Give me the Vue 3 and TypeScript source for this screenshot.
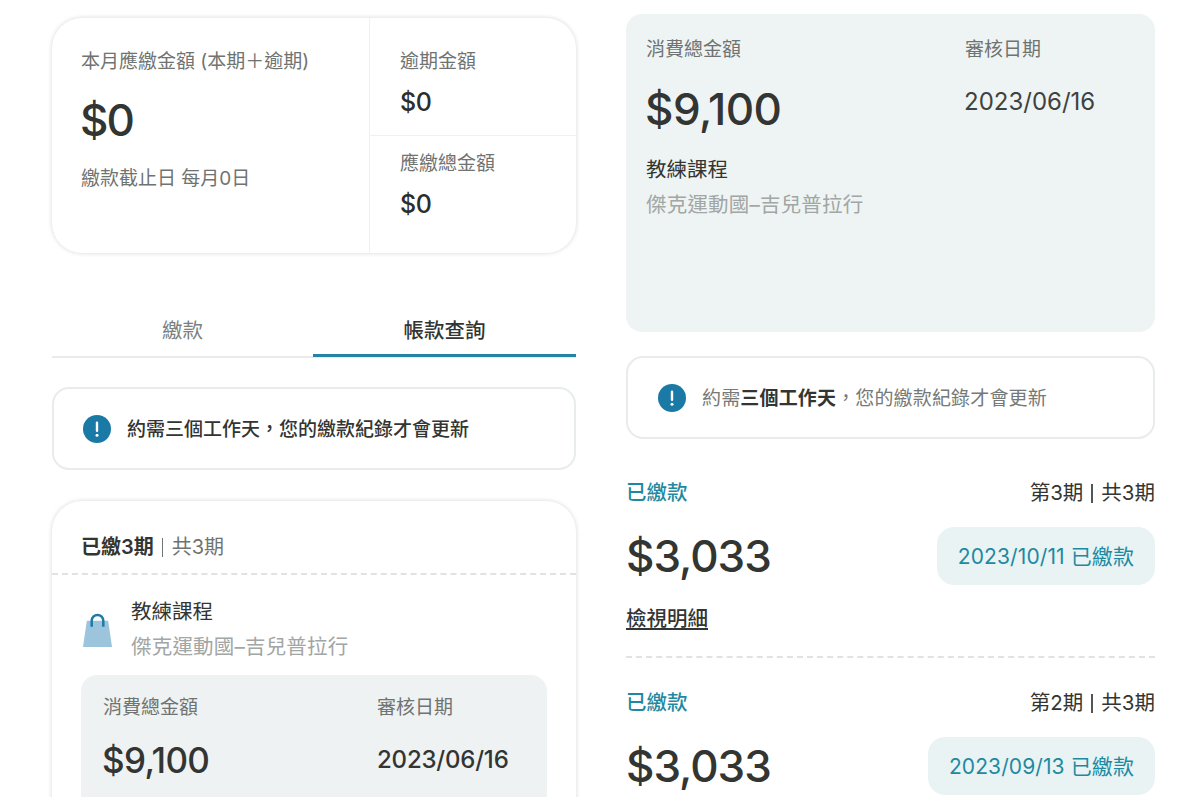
<script setup lang="ts">
interface Payment {
  period: string
  date: string
}
const payments: Payment[] = [
  { period: '第3期', date: '2023/10/11 已繳款' },
  { period: '第2期', date: '2023/09/13 已繳款' },
]
</script>

<template>
  <div class="page">
    <section class="left">
      <div class="summary">
        <div class="sum-main">
          <div class="label">本月應繳金額 (本期＋逾期)</div>
          <div class="sum-big">$0</div>
          <div class="label sum-due">繳款截止日 每月0日</div>
        </div>
        <div class="sum-side">
          <div class="side-cell">
            <div class="label">逾期金額</div>
            <div class="side-val">$0</div>
          </div>
          <div class="side-cell side-second">
            <div class="label">應繳總金額</div>
            <div class="side-val">$0</div>
          </div>
        </div>
      </div>

      <div class="tabs">
        <div class="tab">繳款</div>
        <div class="tab active">帳款查詢</div>
      </div>

      <div class="notice notice-left">
        <svg class="info" viewBox="0 0 28 28"><circle cx="14" cy="14" r="14" fill="#1a79a5" /><rect x="12.8" y="6.5" width="2.4" height="10.5" rx="1.2" fill="#fff" /><circle cx="14" cy="20.3" r="1.5" fill="#fff" /></svg>
        <span class="notice-bold">約需三個工作天，您的繳款紀錄才會更新</span>
      </div>

      <div class="plan">
        <div class="plan-head"><b>已繳3期</b><i></i><span>共3期</span></div>
        <div class="plan-body">
          <div class="course">
            <svg class="bag" viewBox="0 0 32 36">
              <path d="M5 8h22l4 27H1z" fill="#9cc5dd" />
              <path d="M10 14V8a6 6 0 0 1 12 0v6" fill="none" stroke="#1f7ba6" stroke-width="2.6" />
            </svg>
            <div>
              <div class="course-name">教練課程</div>
              <div class="course-sub">傑克運動國–吉兒普拉行</div>
            </div>
          </div>
          <div class="detail-small">
            <div class="detail-col1">
              <div class="label">消費總金額</div>
              <div class="small-amt">$9,100</div>
            </div>
            <div>
              <div class="label">審核日期</div>
              <div class="small-date">2023/06/16</div>
            </div>
          </div>
        </div>
      </div>
    </section>

    <section class="right">
      <div class="detail-big">
        <div class="big-col1">
          <div class="label">消費總金額</div>
          <div class="big-amt">$9,100</div>
          <div class="course-name big-name">教練課程</div>
          <div class="course-sub big-sub">傑克運動國–吉兒普拉行</div>
        </div>
        <div>
          <div class="label">審核日期</div>
          <div class="big-date">2023/06/16</div>
        </div>
      </div>

      <div class="notice notice-right">
        <svg class="info" viewBox="0 0 28 28"><circle cx="14" cy="14" r="14" fill="#1a79a5" /><rect x="12.8" y="6.5" width="2.4" height="10.5" rx="1.2" fill="#fff" /><circle cx="14" cy="20.3" r="1.5" fill="#fff" /></svg>
        <span class="notice-plain">約需<b>三個工作天</b>，您的繳款紀錄才會更新</span>
      </div>

      <div v-for="(p, i) in payments" :key="p.period" class="pay" :class="{ first: i === 0 }">
        <div class="pay-top">
          <span class="paid">已繳款</span>
          <span class="period">{{ p.period }}<i></i>共3期</span>
        </div>
        <div class="pay-mid">
          <span class="pay-amt">$3,033</span>
          <span class="pay-pill">{{ p.date }}</span>
        </div>
        <a v-if="i === 0" class="pay-link">檢視明細</a>
      </div>
    </section>
  </div>
</template>

<style>
html, body { margin: 0; background: #fff; }
</style>

<style scoped>
.page {
  width: 1200px;
  height: 797px;
  overflow: hidden;
  display: flex;
  background: #fff;
  color: #333532;
  font-family: Inter, "Noto Sans CJK TC", sans-serif;
  box-sizing: border-box;
  padding-left: 52px;
}
.left { width: 524px; padding-top: 18px; flex-shrink: 0; }
.right { width: 529px; margin-left: 50px; padding-top: 14px; flex-shrink: 0; }
.label { font-size: 19px; line-height: 28px; color: #6f7371; }

.summary {
  height: 235px;
  border-radius: 30px;
  display: flex;
  box-shadow: 0 0 4px rgba(60, 70, 70, 0.22);
  box-sizing: border-box;
}
.sum-main { width: 318px; padding: 30px 0 0 29px; box-sizing: border-box; border-right: 1px solid #eef1f1; }
.sum-big { font-size: 44px; line-height: 54px; margin-top: 17px; font-weight: 500; letter-spacing: -2px; margin-left: -1px; }
.sum-due { margin-top: 18px; }
.sum-side { flex: 1; }
.side-cell { height: 117px; padding: 30px 0 0 30px; box-sizing: border-box; }
.side-second { border-top: 1px solid #eef1f1; padding-top: 14px; }
.side-val { font-size: 25px; line-height: 34px; margin-top: 9px; color: #2c2e2c; font-weight: 500; letter-spacing: -0.5px; }

.tabs { display: flex; margin-top: 55px; height: 48px; border-bottom: 2px solid #e9ebeb; box-sizing: content-box; }
.tab { width: 261px; text-align: center; font-size: 20.5px; line-height: 46px; color: #7b7f7d; box-sizing: border-box; }
.tab.active { flex: 1; color: #333532; border-bottom: 3px solid #2583a8; height: 49px; font-weight: 500; }

.notice {
  height: 83px;
  border: 2px solid #e9ecec;
  border-radius: 17px;
  display: flex;
  align-items: center;
  box-sizing: border-box;
  background: #fff;
}
.notice-left { margin-top: 29px; padding-left: 29px; }
.notice-right { margin-top: 24px; padding-left: 30px; }
.info { width: 28px; height: 28px; flex-shrink: 0; }
.notice-bold { margin-left: 16px; font-size: 19px; font-weight: 500; color: #333532; margin-top: -2px; }
.notice-plain { margin-left: 16px; font-size: 19px; letter-spacing: 0.16px; color: #757977; margin-top: -2px; }
.notice-plain b { color: #333532; }

.plan {
  margin-top: 31px;
  border-radius: 30px 30px 0 0;
  box-shadow: 0 0 4px rgba(60, 70, 70, 0.22);
  height: 400px;
}
.plan-head {
  height: 74px;
  padding: 31px 0 0 29px;
  box-sizing: border-box;
  border-bottom: 2px dashed #dfe3e3;
  font-size: 20px;
  line-height: 30px;
  display: flex;
  align-items: flex-start;
  color: #6f7371;
}
.plan-head b { color: #333532; font-weight: 600; }
.plan-head i { width: 1px; height: 19px; margin: 6px 9px 0 8px; background: #6f7371; }
.plan-body { padding: 22px 29px 0; }
.course { display: flex; align-items: center; gap: 18px; padding-left: 1px; }
.bag { width: 31px; height: 35px; flex-shrink: 0; margin-top: 2px; }
.course-name { font-size: 20.5px; line-height: 30px; color: #333532; }
.course-sub { font-size: 20.5px; line-height: 30px; color: #a2a6a4; margin-top: 5px; letter-spacing: 0.2px; }
.detail-small {
  margin-top: 13px;
  height: 200px;
  background: #eef2f2;
  border-radius: 16px;
  display: flex;
  padding: 19px 0 0 22px;
  box-sizing: border-box;
}
.detail-col1 { width: 274px; }
.small-amt { font-size: 35px; line-height: 44px; margin-top: 16px; font-weight: 500; letter-spacing: -0.6px; margin-left: -1px; }
.small-date { font-size: 24px; line-height: 32px; margin-top: 22px; font-weight: 500; letter-spacing: -0.2px; }

.detail-big {
  height: 318px;
  background: #eef4f3;
  border-radius: 16px;
  display: flex;
  padding: 22px 0 0 20px;
  box-sizing: border-box;
}
.big-col1 { width: 319px; }
.big-amt { font-size: 44px; line-height: 56px; margin-top: 17px; margin-left: -1px; font-weight: 500; letter-spacing: -0.5px; }
.big-name { margin-top: 18px; }
.big-sub { margin-top: 5px; }
.big-date { font-size: 24px; line-height: 32px; margin-top: 22px; margin-left: -1px; color: #3f4240; }

.pay { padding-top: 30px; }
.pay.first { padding-top: 39px; border-bottom: 2px dashed #dfe3e3; padding-bottom: 17px; }
.pay-top { display: flex; justify-content: space-between; align-items: center; font-size: 20.5px; line-height: 30px; }
.paid { color: #1d8aa2; font-weight: 500; }
.period { color: #333532; display: flex; align-items: center; }
.period i { width: 2px; height: 19px; margin: 0 8px; background: #555; }
.pay-mid { display: flex; justify-content: space-between; align-items: center; margin-top: 19px; }
.pay-amt { font-size: 44px; line-height: 54px; font-weight: 500; letter-spacing: -1px; }
.pay-pill {
  font-size: 21px;
  line-height: 57px;
  padding: 1px 21px 0;
  letter-spacing: 0.1px;
  background: #eaf3f3;
  border-radius: 17px;
  color: #1d8aa2;
}
.pay-link { display: block; margin-top: 14px; font-size: 20.5px; line-height: 40px; text-decoration: underline; font-weight: 500; color: #333532; }
</style>
